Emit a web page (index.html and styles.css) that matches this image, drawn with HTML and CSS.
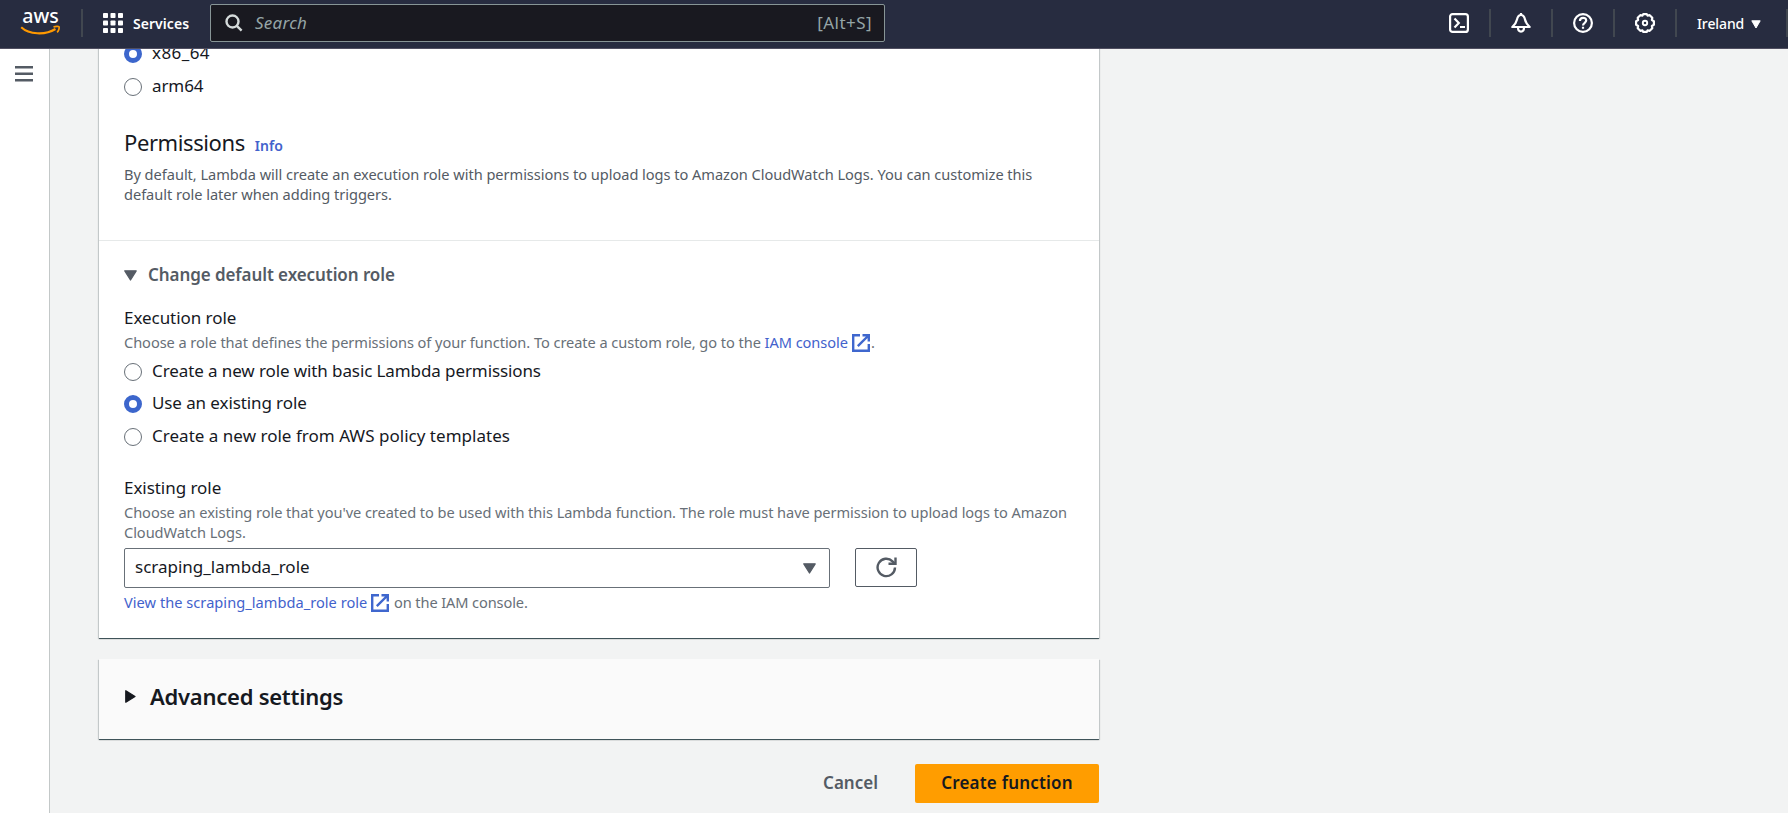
FILE: index.html
```
<!DOCTYPE html>
<html lang="en">
<head>
<meta charset="utf-8">
<title>Create function - Lambda</title>
<link rel="stylesheet" href="styles.css">
</head>
<body>
<header class="topbar">
  <svg class="logo" width="42" height="28" viewBox="0 0 42 28">
    <text class="logo-text" x="2.3" y="14.3" textLength="36.5" lengthAdjust="spacingAndGlyphs">aws</text>
    <path d="M1.2 18.2C9 25.5 25 26.5 35.5 20" fill="none" stroke="#f90" stroke-width="2.1"/>
    <path d="M33.500 18c2-.8 5-.9 5.500-.2s-.1 3.800-1.900 5.500" fill="none" stroke="#f90" stroke-width="1.700"/>
  </svg>
  <span class="divider divider-logo"></span>
  <div class="services">
    <svg width="20" height="20" viewBox="0 0 20 20" fill="#fff">
      <rect width="5" height="5" rx=".8"/><rect x="7.500" width="5" height="5" rx=".8"/><rect x="15" width="5" height="5" rx=".8"/>
      <rect y="7.500" width="5" height="5" rx=".8"/><rect x="7.500" y="7.500" width="5" height="5" rx=".8"/><rect x="15" y="7.500" width="5" height="5" rx=".8"/>
      <rect y="15" width="5" height="5" rx=".8"/><rect x="7.500" y="15" width="5" height="5" rx=".8"/><rect x="15" y="15" width="5" height="5" rx=".8"/>
    </svg>
    <span>Services</span>
  </div>
  <div class="search">
    <svg width="18" height="18" viewBox="0 0 18 18" fill="none" stroke="#d5dbdb" stroke-width="2.4"><circle cx="7.500" cy="7.500" r="6"/><path d="M11.800 11.800l4.800 4.800"/></svg>
    <span class="search-label">Search</span>
    <span class="search-key">[Alt+S]</span>
  </div>
  <nav class="tools">
    <span class="tool"><svg width="20" height="20" viewBox="0 0 20 20" fill="none" stroke="#fff" stroke-width="2.200"><rect x="1.100" y="1.100" width="17.800" height="17.800" rx="2.500"/><path d="M5.500 5.500l4.300 4.500-4.300 4.500M11 14h5"/></svg></span>
    <span class="tool"><svg width="20" height="20" viewBox="0 0 20 20" fill="none" stroke="#fff" stroke-width="2.200" stroke-linejoin="round"><path d="M10 2C7.500 2 6.500 4.200 6 6.500 5.400 9.500 4 11.500 1.300 14h17.400C16 11.500 14.600 9.500 14 6.500 13.500 4.200 12.500 2 10 2zM10 0v2"/><path d="M7 14.500c0 5.400 6 5.400 6 0"/></svg></span>
    <span class="tool"><svg width="20" height="20" viewBox="0 0 20 20" fill="none" stroke="#fff" stroke-width="2.200"><circle cx="10" cy="10" r="8.900"/><path d="M6.900 8c0-4.200 6.300-4.200 6.300-.4 0 2.200-3.200 2.200-3.200 4.900M10 13.800v2"/></svg></span>
    <span class="tool"><svg width="20" height="20" viewBox="0 0 20 20" fill="none" stroke="#fff" stroke-width="2.200" stroke-linejoin="round"><path d="M8.300 1.100h3.400l.8 1.500 2.200-.4 2.600 2.600-.4 2.200 2 1.200v3.600l-2 1.200.4 2.200-2.600 2.600-2.200-.4-.8 1.500H8.300l-.8-1.500-2.200.4-2.600-2.600.4-2.200-2-1.200V8.200l2-1.200-.4-2.200 2.600-2.600 2.200.4z"/><circle cx="10" cy="10" r="2.200" stroke-width="1.900"/></svg></span>
    <span class="region"><span>Ireland</span><svg width="10" height="9" viewBox="0 0 10 9"><path d="M.8.800h8.400L5 8z" fill="#fff" stroke="#fff" stroke-linejoin="round"/></svg></span>
  </nav>
</header>
<div class="body">
  <aside class="sidebar">
    <svg width="18" height="16" viewBox="0 0 18 16" fill="#545b64"><path d="M0 0h18v2.500H0zM0 6.600h18v2.500H0zM0 13h18v2.500H0z"/></svg>
  </aside>
  <main class="main">
    <section class="card">
      <div class="basics">
        <label class="option"><i class="radio checked"></i><span class="arch">x86_64</span></label>
        <label class="option"><i class="radio"></i><span>arm64</span></label>
        <h2 class="heading"><span>Permissions</span><a class="info">Info</a></h2>
        <p class="desc">By default, Lambda will create an execution role with permissions to upload logs to Amazon CloudWatch Logs. You can customize this<br>default role later when adding triggers.</p>
      </div>
      <div class="role">
        <div class="expander"><svg width="13" height="11" viewBox="0 0 13 11"><path d="M.8.800h11.400L6.500 10z" fill="#545b64" stroke="#545b64" stroke-width="1.300" stroke-linejoin="round"/></svg><span>Change default execution role</span></div>
        <h3 class="label">Execution role</h3>
        <p class="hint">Choose a role that defines the permissions of your function. To create a custom role, go to the <a>IAM console</a><svg class="external" width="18" height="18" viewBox="0 0 18 18" fill="none" stroke="#3f67ce" stroke-width="2.4"><path d="M8 1.200H1.200v15.600h15.600V10M10.500 1.200h6.300v6.300M16.500 1.500L5.800 12.200"/></svg>.</p>
        <div class="options">
          <label class="option"><i class="radio"></i><span>Create a new role with basic Lambda permissions</span></label>
          <label class="option"><i class="radio checked"></i><span>Use an existing role</span></label>
          <label class="option"><i class="radio"></i><span class="templates">Create a new role from AWS policy templates</span></label>
        </div>
        <h3 class="label existing">Existing role</h3>
        <p class="hint">Choose an existing role that you've created to be used with this Lambda function. The role must have permission to upload logs to Amazon<br>CloudWatch Logs.</p>
        <div class="picker">
          <div class="select"><span>scraping_lambda_role</span><svg width="13" height="11" viewBox="0 0 13 11"><path d="M.8.800h11.400L6.500 10z" fill="#545b64" stroke="#545b64" stroke-width="1.300" stroke-linejoin="round"/></svg></div>
          <div class="refresh"><svg width="21" height="21" viewBox="0 0 21 21" fill="none" stroke="#545b64" stroke-width="2.4"><path d="M19 10.500A8.700 8.700 0 1 1 16.500 4.300L18.500 6.300"/><path d="M19.500.5v6.300h-7"/></svg></div>
        </div>
        <p class="hint view"><a class="view-link">View the scraping_lambda_role role</a><svg class="external" width="18" height="18" viewBox="0 0 18 18" fill="none" stroke="#3f67ce" stroke-width="2.4"><path d="M8 1.200H1.200v15.600h15.600V10M10.500 1.200h6.300v6.300M16.500 1.500L5.800 12.200"/></svg><span class="after"> on the IAM console.</span></p>
      </div>
    </section>
    <section class="card advanced">
      <svg width="11" height="13" viewBox="0 0 11 13"><path d="M.8.800v11.400L10 6.500z" fill="#16191f" stroke="#16191f" stroke-width="1.300" stroke-linejoin="round"/></svg>
      <h2>Advanced settings</h2>
    </section>
    <div class="actions">
      <button class="cancel">Cancel</button>
      <button class="create">Create function</button>
    </div>
  </main>
</div>
</body>
</html>
```
FILE: styles.css
```
* { box-sizing: border-box; }
body {
  margin: 0;
  height: 813px;
  overflow: hidden;
  background: #f2f3f3;
  color: #16191f;
  font: 17px/24px "Noto Sans", sans-serif;
  letter-spacing: -0.1px;
}
h2, h3, p { margin: 0; font-weight: 400; }
svg { display: block; flex: none; }
a { color: #4262cc; }

.topbar {
  display: flex;
  align-items: center;
  height: 49px;
  padding-bottom: 2px;
  background: #272c40;
  border-bottom: 1px solid #504f61;
  color: #fff;
}
.logo { margin-left: 20px; margin-top: -1px; overflow: visible; }
.logo-text { font: 500 19px "Noto Sans", sans-serif; fill: #fff; letter-spacing: 0; }
.divider { width: 2px; height: 28px; background: #414750; }
.divider-logo { margin-left: 19px; }
.services {
  display: flex;
  align-items: center;
  gap: 10px;
  margin-left: 20px;
  width: 107px;
  font-size: 14px;
  font-weight: 600;
  letter-spacing: .05px;
}
.services span { position: relative; top: 1px; }
.search {
  display: flex;
  align-items: center;
  width: 675px;
  height: 38px;
  padding: 0 12px 0 14px;
  background: #191920;
  border: 1px solid #879596;
  border-radius: 2px;
  color: #95a5a6;
}
.search-label { margin-left: 12px; font-style: italic; letter-spacing: .25px; }
.search-key { margin-left: auto; letter-spacing: .45px; }
.tools { display: flex; align-items: center; height: 28px; margin-left: auto; }
.tool {
  display: flex;
  align-items: center;
  justify-content: center;
  width: 62px;
  height: 28px;
  border-right: 2px solid #414750;
}
.region {
  display: flex;
  align-items: center;
  gap: 7px;
  height: 28px;
  width: 111px;
  padding: 2px 0 0 20px;
  border-right: 2px solid #414750;
  font-size: 14px;
  font-weight: 500;
  letter-spacing: -.1px;
}

.body { display: flex; height: 764px; overflow: hidden; }
.sidebar {
  flex: none;
  width: 50px;
  padding: 17px 0 0 15px;
  background: #fff;
  border-right: 1px solid #c3c8c8;
}
.main { flex: none; width: 1001px; margin-left: 48px; }
.main > .card:first-child { margin-top: -11px; }
.card {
  margin: 0 1px;
  width: 1000px;
  background: #fff;
  box-shadow: 0 1px 1px rgba(0, 28, 36, .3), 1px 1px 1px rgba(0, 28, 36, .15), -1px 1px 1px rgba(0, 28, 36, .15), 0 1px 0 #7f8c8f;
}
.basics { height: 203px; padding: 0 25px; border-bottom: 1px solid #e6e9e9; }
.option { display: flex; align-items: center; gap: 10px; height: 32.5px; }
.option span { position: relative; top: -1px; }
.option .arch { letter-spacing: .43px; }
.option .templates { letter-spacing: 0.02px; }
.radio {
  width: 18px;
  height: 18px;
  border: 1.25px solid #687078;
  border-radius: 50%;
  background: #fff;
}
.radio.checked { border: 5.5px solid #3c66cc; }
.heading {
  display: flex;
  align-items: baseline;
  gap: 10px;
  margin-top: 25px;
  font-size: 22px;
  line-height: 28px;
  letter-spacing: -.4px;
}
.info { font-size: 14px; font-weight: 600; letter-spacing: .05px; }
.desc { margin-top: 4px; font-size: 14.6px; line-height: 20px; letter-spacing: -.035px; color: #545b64; white-space: nowrap; }
.role { height: 397px; padding: 22px 25px 0; }
.expander { display: flex; align-items: center; gap: 11px; color: #545b64; font-weight: 600; letter-spacing: -.08px; }
.label { margin-top: 19px; font-size: 17px; letter-spacing: -.05px; }
.hint { margin-top: 2px; font-size: 14.6px; line-height: 20px; letter-spacing: -.06px; color: #687078; white-space: nowrap; }
.external { display: inline-block; margin: -5px 1px -3px 4px; vertical-align: middle; }
.options { margin-top: 3.5px; }
.existing { margin-top: 23px; }
.picker { display: flex; gap: 25px; margin-top: 6px; }
.select {
  display: flex;
  align-items: center;
  justify-content: space-between;
  width: 706px;
  height: 40px;
  padding: 0 13px 0 10px;
  border: 1px solid #687078;
  border-radius: 2px;
  letter-spacing: 0;
}
.select span { position: relative; top: -1px; }
.refresh {
  display: flex;
  align-items: center;
  justify-content: center;
  width: 62px;
  height: 39px;
  border: 1px solid #545b64;
  border-radius: 2px;
}
.view { margin-top: 3.500px; }
.view-link { letter-spacing: .03px; }
.after { letter-spacing: -.11px; }
.advanced {
  display: flex;
  align-items: center;
  gap: 14px;
  height: 80px;
  margin-top: 21px;
  padding: 0 26px 5px;
  background: #fafafa;
}
.advanced h2 { position: relative; top: -1px; font-size: 22px; line-height: 28px; font-weight: 600; letter-spacing: -.25px; }
.actions { display: flex; justify-content: flex-end; align-items: center; gap: 37px; margin-top: 25px; }
.actions button {
  height: 39px;
  padding: 0 0 1px;
  border: 0;
  background: none;
  color: #545b64;
  font: 600 17px/24px "Noto Sans", sans-serif;
  letter-spacing: 0;
}
.actions .create { width: 184px; background: #ff9d00; color: #16191f; border-radius: 2px; letter-spacing: .2px; }
```
